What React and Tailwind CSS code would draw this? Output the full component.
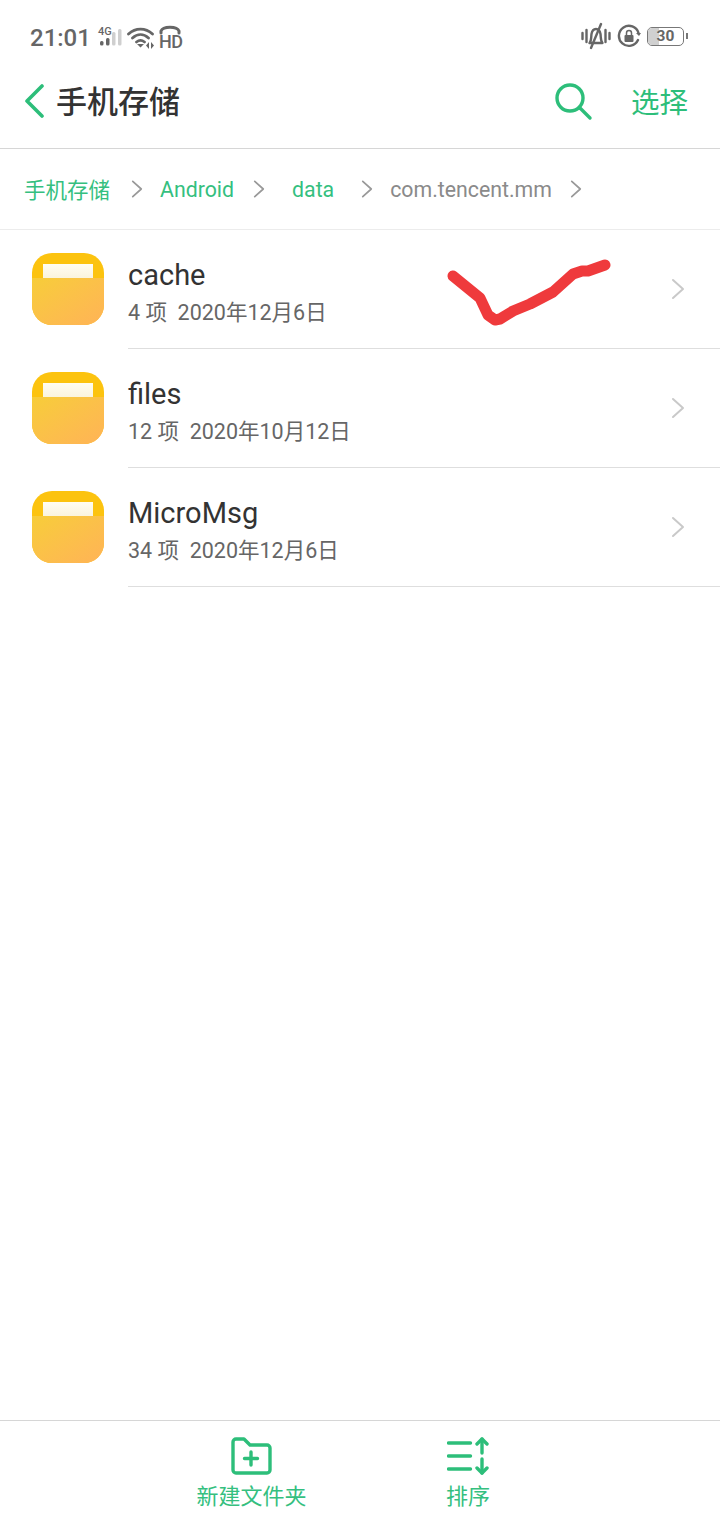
import React from 'react';

const green = '#2dbe7a';

function Chevron({ className }) {
  return (
    <svg width="14" height="22" viewBox="0 0 14 22" fill="none" className={className}>
      <path d="M2 2l10 9-10 9" stroke="currentColor" strokeWidth="2" strokeLinecap="round" strokeLinejoin="round" />
    </svg>
  );
}

function Folder() {
  return (
    <div className="relative w-[72px] h-[72px] -mt-[2px] rounded-[20px] overflow-hidden shrink-0 bg-[#fcc30f]">
      <div className="absolute left-[11px] top-[11px] w-[50px] h-[15px] bg-gradient-to-b from-[#fffdf2] to-[#faf3dc]" />
      <div className="absolute left-0 right-0 bottom-0 h-[47px] bg-gradient-to-br from-[#f7cd38] to-[#ffb356]" />
    </div>
  );
}

function Row({ name, meta, count }) {
  return (
    <div className="flex items-center h-[119px] pl-8">
      <Folder />
      <div className="ml-6 flex-1 h-full flex items-center justify-between border-b border-[#dedede] pr-[35px]">
        <div className="pt-[7px]">
          <div className="text-[29px] leading-[36px] text-[#333333]">{name}</div>
          <div className="mt-[5px] text-[21.5px] leading-[30px] text-[#666666] whitespace-pre">{count} 项  {meta}</div>
        </div>
        <Chevron className="text-[#c9c9c9]" />
      </div>
    </div>
  );
}

function StatusBar() {
  return (
    <div className="h-[72px] pt-[4px] flex items-center justify-between pl-[30px] pr-[32px] text-[#666666] shrink-0">
      <div className="flex items-center">
        <span className="text-[24px] font-medium">21:01</span>
        <div className="relative ml-[7px] w-[26px] h-[24px]">
          <span className="absolute left-0 -top-[1px] text-[11px] leading-[14px] font-medium">4G</span>
          <svg width="26" height="24" viewBox="0 0 26 24" className="absolute left-0 top-0">
            <rect x="2" y="15" width="3.500" height="4.500" rx="1.500" fill="#666" />
            <rect x="8" y="12" width="3.500" height="7.500" rx="1.500" fill="#666" />
            <rect x="14" y="6" width="3.500" height="13.500" rx="1.500" fill="#cfcfcf" />
            <rect x="20" y="3" width="3.500" height="16.500" rx="1.500" fill="#cfcfcf" />
          </svg>
        </div>
        <svg width="30" height="22" viewBox="0 0 30 22" fill="none" className="ml-[3px]">
          <path d="M1.500 7C8.500 0.500 18.500 0.500 25.500 7M5.500 11C10.500 6.500 16.500 6.500 21.500 11M9.500 15C12 13 15 13 17.500 15" stroke="#666" strokeWidth="2.800" strokeLinecap="round" />
          <path d="M13.500 20.500l-3.500-3.500h7zM22 15v7l-3-3.500zM24 15v7l3-3.500z" fill="#666" />
        </svg>
        <div className="relative ml-[2px] w-[22px] h-[26px]">
          <svg width="22" height="10" viewBox="0 0 22 10" fill="none" className="absolute left-0 top-0">
            <path d="M2 8V6C4 1 18 1 20 6v2" stroke="#666" strokeWidth="3" strokeLinecap="round" />
          </svg>
          <span className="absolute left-0 top-[8px] text-[18px] leading-[18px] font-medium tracking-[-0.5px]">HD</span>
        </div>
      </div>
      <div className="flex items-center mb-[4px]">
        <svg width="30" height="30" viewBox="0 0 30 30" fill="none">
          <path d="M1.500 12v6M5.500 9v12M24.500 9v12M28.500 12v6" stroke="#666" strokeWidth="2.400" strokeLinecap="round" />
          <path d="M8.500 22c2-2 1.500-5 2-9 .5-3 2.500-5 4.500-5s4 2 4.500 5c.5 4 0 7 2 9z" stroke="#666" strokeWidth="2.400" strokeLinejoin="round" />
          <path d="M20 3L10 27" stroke="#666" strokeWidth="2.400" strokeLinecap="round" />
        </svg>
        <svg width="24" height="24" viewBox="0 0 24 24" fill="none" className="ml-[6px]">
          <path d="M21 16A10 10 0 1 1 21.500 9" stroke="#666" strokeWidth="2.400" strokeLinecap="round" />
          <path d="M19 9h5l-2 3z" fill="#666" />
          <rect x="7.500" y="11" width="9" height="7" rx="1" fill="#666" />
          <path d="M9.500 11V9a2.500 2.500 0 0 1 5 0v2" stroke="#666" strokeWidth="1.500" />
        </svg>
        <div className="relative ml-[6px] w-[37px] h-[19px] rounded-[5px] border border-[#777777] overflow-hidden flex items-center justify-center">
          <div className="absolute left-0 top-0 bottom-0 w-[11px] bg-[#d0d0d0]" />
          <span className="relative text-[15.5px] leading-[17px] font-bold">30</span>
        </div>
        <div className="ml-[2px] w-[2px] h-[6px] bg-[#777777]" />
      </div>
    </div>
  );
}

function App() {
  return (
    <div className="relative w-[720px] h-[1520px] bg-white flex flex-col overflow-hidden font-['Roboto','Noto_Sans_CJK_SC',sans-serif]">
      <StatusBar />

      <div className="h-[77px] pb-[16px] flex items-center justify-between pl-[23px] pr-[32px] border-b border-[#d6d6d6] shrink-0">
        <div className="flex items-center">
          <svg width="22" height="36" viewBox="0 0 22 36" fill="none">
            <path d="M19 2L4 17l15 15" stroke={green} strokeWidth="3.600" strokeLinecap="round" strokeLinejoin="round" />
          </svg>
          <span className="ml-[11px] mb-[4px] text-[31px] leading-[40px] font-medium text-[#333333] font-['Noto_Sans_CJK_SC',sans-serif]">手机存储</span>
        </div>
        <div className="flex items-center">
          <svg width="38" height="38" viewBox="0 0 38 38" fill="none">
            <circle cx="15" cy="15" r="13" stroke={green} strokeWidth="3.400" />
            <path d="M25 25l10 10" stroke={green} strokeWidth="3.400" strokeLinecap="round" />
          </svg>
          <span className="ml-[38px] mb-[2px] text-[28.5px] leading-[40px] text-[#2dbe7a] font-['Noto_Sans_CJK_SC',sans-serif]">选择</span>
        </div>
      </div>

      <div className="h-[81px] flex items-center pl-[24px] border-b border-[#ececec] shrink-0 text-[21.3px]">
        <span className="text-[#35bf7f] font-['Noto_Sans_CJK_SC',sans-serif] text-[21.5px]">手机存储</span>
        <Chevron className="ml-[20px] scale-[0.85] text-[#999999]" />
        <span className="ml-[16px] mt-[2px] text-[#35bf7f]">Android</span>
        <Chevron className="ml-[18px] scale-[0.85] text-[#999999]" />
        <span className="ml-[26px] mt-[2px] text-[#35bf7f]">data</span>
        <Chevron className="ml-[26px] scale-[0.85] text-[#999999]" />
        <span className="ml-[16px] mt-[2px] text-[#8a8a8a]">com.tencent.mm</span>
        <Chevron className="ml-[17px] scale-[0.85] text-[#999999]" />
      </div>

      <div className="shrink-0">
        <Row name="cache" count="4" meta="2020年12月6日" />
        <Row name="files" count="12" meta="2020年10月12日" />
        <Row name="MicroMsg" count="34" meta="2020年12月6日" />
      </div>

      <div className="flex-1" />

      <div className="h-[100px] border-t border-[#d6d6d6] shrink-0 flex">
        <div className="w-[360px] flex flex-col items-center pl-[143px] pt-[15px]">
          <svg width="42" height="40" viewBox="0 0 42 40" fill="none">
            <path d="M2 6a3 3 0 0 1 3-3h8l6 6h17a3 3 0 0 1 3 3v22a3 3 0 0 1-3 3H5a3 3 0 0 1-3-3z" stroke={green} strokeWidth="3.400" strokeLinejoin="round" />
            <path d="M20 16v13M13.500 22.500h13" stroke={green} strokeWidth="3.400" strokeLinecap="round" />
          </svg>
          <span className="mt-[3px] text-[22px] leading-[30px] text-[#35bf7f] font-['Noto_Sans_CJK_SC',sans-serif]">新建文件夹</span>
        </div>
        <div className="flex flex-col items-center ml-[86px] pt-[15px]">
          <svg width="42" height="40" viewBox="0 0 42 40" fill="none">
            <path d="M1.500 7h22M1.500 20h22M1.500 33h22M35 3v14M35 23v14" stroke={green} strokeWidth="3.400" strokeLinecap="round" />
            <path d="M30 8l5-5 5 5M30 32l5 5 5-5" stroke={green} strokeWidth="3.400" strokeLinecap="round" strokeLinejoin="round" />
          </svg>
          <span className="mt-[3px] text-[22px] leading-[30px] text-[#35bf7f] font-['Noto_Sans_CJK_SC',sans-serif]">排序</span>
        </div>
      </div>

      {/* hand-drawn mark on top of the list */}
      <svg width="720" height="400" viewBox="0 0 720 400" fill="none" className="absolute left-0 top-0 pointer-events-none">
        <path d="M453 276L480 298L488 315L495 320L500 319L513 311L530 304L553 292L573 274L582 271L588 271L605 265" stroke="#ef3a3c" strokeWidth="11" strokeLinecap="round" strokeLinejoin="round" />
      </svg>
    </div>
  );
}

export default App;
